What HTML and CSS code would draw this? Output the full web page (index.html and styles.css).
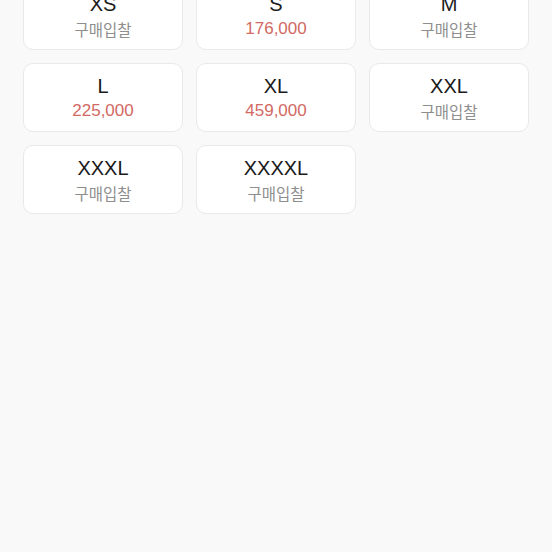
FILE: index.html
```html
<!DOCTYPE html>
<html lang="ko">
<head>
<meta charset="utf-8">
<link rel="stylesheet" href="styles.css">
</head>
<body>
<div class="grid">
  <div class="card"><div class="size">XS</div><div class="sub">구매입찰</div></div>
  <div class="card"><div class="size">S</div><div class="sub price">176,000</div></div>
  <div class="card"><div class="size">M</div><div class="sub">구매입찰</div></div>
  <div class="card"><div class="size">L</div><div class="sub price">225,000</div></div>
  <div class="card"><div class="size">XL</div><div class="sub price">459,000</div></div>
  <div class="card"><div class="size">XXL</div><div class="sub">구매입찰</div></div>
  <div class="card"><div class="size">XXXL</div><div class="sub">구매입찰</div></div>
  <div class="card"><div class="size">XXXXL</div><div class="sub">구매입찰</div></div>
</div>
</body>
</html>
```
FILE: styles.css
```css
html, body {
  margin: 0;
  padding: 0;
  background: #f9f9f9;
  height: 100%;
}
body {
  font-family: "Liberation Sans", "Noto Sans CJK KR", sans-serif;
  overflow: hidden;
}
.grid {
  display: grid;
  grid-template-columns: repeat(3, 160px);
  column-gap: 13px;
  row-gap: 13px;
  padding: 0 23px;
  margin-top: -19px;
}
.card {
  background: #fff;
  border: 1px solid #e9e9e9;
  border-radius: 10px;
  height: 69px;
  box-sizing: border-box;
  display: flex;
  flex-direction: column;
  align-items: center;
  justify-content: center;
}
.size {
  font-size: 20px;
  line-height: 24px;
  color: #1a1a1a;
}
.sub {
  font-family: "Noto Sans CJK KR", sans-serif;
  font-size: 15.5px;
  line-height: 20px;
  color: #8e8e8e;
  margin-top: 3px;
}
.sub.price {
  font-family: "Liberation Sans", sans-serif;
  font-size: 17px;
  color: #d26963;
}
```
